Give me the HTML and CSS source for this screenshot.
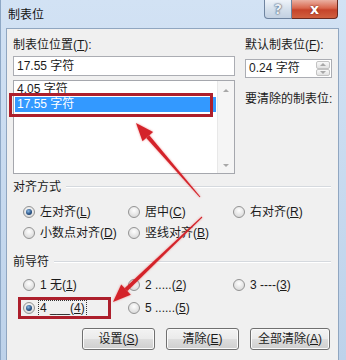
FILE: index.html
```html
<!DOCTYPE html>
<html lang="zh-CN">
<head>
  <meta charset="UTF-8">
  <title>制表位</title>
  <link rel="stylesheet" href="styles.css">
</head>
<body>
  <div class="window">
    <div class="titlebar">
      <span class="title">制表位</span>
      <div class="caption">
        <span class="cap-help">?</span>
        <span class="cap-close">x</span>
      </div>
    </div>

    <div class="client">
      <div class="top">
        <div class="col-left">
          <div class="label">制表位位置(<u>T</u>):</div>
          <div class="textbox">17.55 字符</div>
          <div class="listbox">
            <div class="items">
              <div class="item">4.05 字符</div>
              <div class="item selected">17.55 字符</div>
            </div>
            <div class="scrollbar"><span class="arr-up"></span><span class="arr-down"></span></div>
          </div>
        </div>
        <div class="col-right">
          <div class="label">默认制表位(<u>F</u>):</div>
          <div class="spinner">
            <span class="spin-value">0.24 字符</span>
            <div class="spin"><span class="spin-btn"><i class="arr-up"></i></span><span class="spin-btn"><i class="arr-down"></i></span></div>
          </div>
          <div class="label clear-label">要清除的制表位:</div>
        </div>
      </div>

      <div class="group-title">对齐方式</div>
      <div class="options align-opts">
        <div class="opt"><span class="radio on"></span><span>左对齐(<u>L</u>)</span></div>
        <div class="opt"><span class="radio"></span><span>居中(<u>C</u>)</span></div>
        <div class="opt"><span class="radio"></span><span>右对齐(<u>R</u>)</span></div>
        <div class="opt"><span class="radio"></span><span>小数点对齐(<u>D</u>)</span></div>
        <div class="opt"><span class="radio"></span><span>竖线对齐(<u>B</u>)</span></div>
      </div>

      <div class="group-title leader-title">前导符</div>
      <div class="options leader-opts">
        <div class="opt"><span class="radio"></span><span>1 无(<u>1</u>)</span></div>
        <div class="opt"><span class="radio"></span><span>2 .....(<u>2</u>)</span></div>
        <div class="opt"><span class="radio"></span><span>3 ----(<u>3</u>)</span></div>
        <div class="opt"><span class="radio on"></span><span class="focus">4 ___(<u>4</u>)</span></div>
        <div class="opt"><span class="radio"></span><span>5 ......(<u>5</u>)</span></div>
      </div>

      <div class="buttons">
        <button class="btn">设置(<u>S</u>)</button>
        <button class="btn">清除(<u>E</u>)</button>
        <button class="btn btn-wide">全部清除(<u>A</u>)</button>
      </div>
    </div>

    <div class="mark mark-list"></div>
    <div class="mark mark-leader"></div>

    <svg class="arrows" width="346" height="360" viewBox="0 0 346 360">
      <polygon points="199.4,196.7 198.6,197.3 145.3,137.9 148.3,135.3" />
      <polygon points="135,123 152.1,132 141.5,141.2" />
      <polygon points="201.3,217.4 200.7,216.6 123.6,288.2 126.4,291" />
      <polygon points="112,302 129.8,294.7 120.2,284.5" />
    </svg>
  </div>
</body>
</html>
```

FILE: styles.css
```css
* { box-sizing: border-box; }
body { margin:0;width:346px;height:360px;overflow:hidden;background:linear-gradient(#d2e2f4, #bdd2ea);font:12px/16px "Liberation Sans", "Noto Sans CJK SC", sans-serif;color:#1b1b1b; }
u { text-decoration:underline;text-underline-offset:1px; }
.window { position:relative;height:360px;display:flex;flex-direction:column;border-left:1px solid #8ea8c6; }

/* title bar */
.titlebar { height:28px;flex:none;display:flex;justify-content:space-between;align-items:flex-start;padding:0 8px 0 7px; }
.title { margin-top:7px;line-height:16px;color:#111; }
.caption { display:flex; }
.cap-help, .cap-close { height:19px;display:flex;align-items:center;justify-content:center;font:bold 14px/1 "DejaVu Sans", sans-serif;color:#fff; }
.cap-help { width:28px;border:1px solid #6f84a0;border-top:none;border-radius:0 0 0 4px;background:linear-gradient(#eef3f9, #d5e0ec 50%, #c3d1e2);color:#e9eef5;text-shadow:0 0 2px #3d4e66, 0 0 1px #3d4e66; }
.cap-close { width:46px;border:1px solid #6a2a20;border-top:none;border-left:none;border-radius:0 0 4px 0;background:linear-gradient(#eab0a2, #d9664d 45%, #c6432a 55%, #d0603f);text-shadow:0 0 2px #6a1d10; }

/* client area */
.client { flex:1;margin:0 7px 0 5px;border:1px solid #90a6c0;border-bottom:none;background:#f0f0f0;padding:8px 6px 0 6px; }
.top { display:flex;gap:10px; }
.col-left { width:222px; }
.col-right { width:87px;white-space:nowrap; }
.label { line-height:16px; }
.textbox { margin-top:3px;height:20px;line-height:18px;padding-left:3px;background:#fff;border:1px solid #abadb3; }
.listbox { margin-top:4px;height:94px;display:flex;background:#fff;border:1px solid #a5a7ad; }
.items { flex:1;padding:1px; }
.item { height:15px;line-height:15px;padding-left:2px;overflow:hidden; }
.item.selected { background:#3399ff;color:#fff; }
.scrollbar { width:17px;display:flex;flex-direction:column;justify-content:space-between;align-items:center;padding:8px 0 6px;background:#f5f5f5;border-left:1px solid #e8e8e8; }
.arr-up, .arr-down { display:block;width:0;height:0;border-left:3px solid transparent;border-right:3px solid transparent; }
.arr-up { border-bottom:3px solid #a8a8a8; }
.arr-down { border-top:3px solid #a8a8a8; }

.spinner { margin-top:6px;height:19px;display:flex;background:#fff;border:1px solid #abadb3; }
.spin-value { flex:1;line-height:17px;padding-left:3px; }
.spin { width:14px;margin:1px 1px 1px 0;display:flex;flex-direction:column; }
.spin-btn { flex:1;display:flex;align-items:center;justify-content:center;border:1px solid #c3c3c3;border-radius:2px;background:linear-gradient(#f8f8f8, #e2e2e2); }
.clear-label { margin-top:13px; }

/* groups */
.group-title { margin-top:5px;display:flex;align-items:center;gap:5px;line-height:16px; }
.group-title::after { content:"";flex:1;margin-right:1px;border-top:1px solid #d5d9de;border-bottom:1px solid #fff; }
.leader-title { margin-top:13px; }
.options { display:grid;grid-template-columns:105px 105px auto;padding-left:10px; }
.align-opts { margin-top:9px;row-gap:5px; }
.leader-opts { margin-top:7px;row-gap:7px; }
.opt { display:flex;align-items:center;gap:5px;height:16px;white-space:nowrap; }
.radio { flex:none;width:12px;height:12px;border-radius:50%;border:1px solid #939393;background:radial-gradient(circle at 50% 35%, #fefefe, #dadada 80%); }
.radio.on::after { content:"";display:block;width:6px;height:6px;margin:2px;border-radius:50%;background:radial-gradient(circle at 40% 35%, #8dbbe6, #2a5487 55%, #14304f); }
.focus { display:inline-block;line-height:14px;padding:0 1px 1px;margin-left:-2px;border:1px dotted #333; }

/* buttons */
.buttons { display:flex;justify-content:flex-end;gap:11px;margin-top:12px;padding-right:2px; }
.btn { width:73px;height:22px;padding:0;font:inherit;color:#1b1b1b;border:1px solid #707070;border-radius:3px;background:linear-gradient(#f3f3f3, #ebebeb 48%, #dddddd 52%, #cfcfcf);box-shadow:inset 0 0 0 1px #fbfbfb; }
.btn-wide { width:80px; }

/* annotations */
.mark { position:absolute;border:3px solid #ad1f2c; }
.mark-list { left:8px;top:93px;width:204px;height:24px; }
.mark-leader { left:17px;top:297px;width:93px;height:22px; }
.arrows { position:absolute;left:0;top:0;fill:#d4232a;filter:drop-shadow(0 0 1px rgba(230,80,80,.6)); }
```
